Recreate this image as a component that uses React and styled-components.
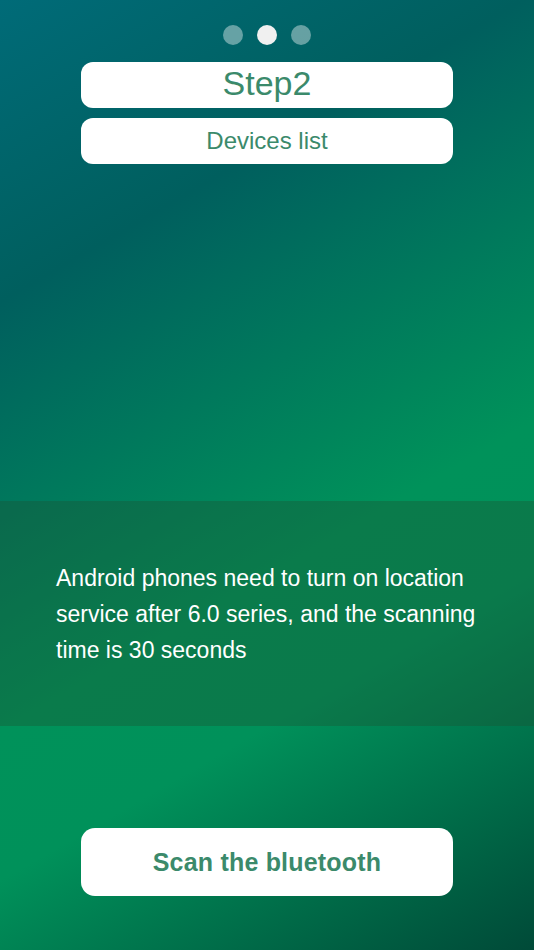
import React from 'react';
import styled, { createGlobalStyle } from 'styled-components';

const GlobalStyle = createGlobalStyle`
  * {
    box-sizing: border-box;
  }

  body {
    margin: 0;
    font-family: 'Liberation Sans', Arial, sans-serif;
  }
`;

const Page = styled.div`
  width: 100%;
  min-height: 950px;
  display: flex;
  flex-direction: column;
  background: linear-gradient(
    150deg,
    #006b78 0%,
    #005f5e 24%,
    #00925a 58%,
    #00915a 70%,
    #004a38 100%
  );
`;

const Header = styled.div`
  height: 501px;
  display: flex;
  flex-direction: column;
  align-items: center;
  padding: 25px 81px 0;
`;

const Dots = styled.div`
  display: flex;
  gap: 14px;
  margin-bottom: 17px;
`;

const Dot = styled.span`
  width: 20px;
  height: 20px;
  border-radius: 50%;
  background-color: ${({ active }) => (active ? '#f0f0f0' : 'rgba(255, 255, 255, 0.4)')};
`;

const Label = styled.div`
  width: 100%;
  height: 46px;
  border-radius: 12px;
  background-color: #fff;
  color: #3b8a6b;
  display: flex;
  align-items: center;
  justify-content: center;
  font-size: ${({ big }) => (big ? '34px' : '24px')};
  padding-bottom: ${({ big }) => (big ? '4px' : '1px')};
  margin-bottom: 10px;
`;

const Notice = styled.div`
  height: 225px;
  padding: 59px 40px 0 56px;
  background-color: rgba(30, 80, 50, 0.35);
`;

const NoticeText = styled.p`
  margin: 0;
  color: #fff;
  font-size: 23px;
  line-height: 36px;
`;

const Footer = styled.div`
  flex: 1;
  display: flex;
  justify-content: center;
  padding: 102px 81px 0;
`;

const ScanButton = styled.button`
  width: 100%;
  height: 68px;
  border: none;
  border-radius: 14px;
  background-color: #fff;
  color: #3b8a6b;
  font-family: 'Liberation Sans', Arial, sans-serif;
  font-size: 25px;
  font-weight: bold;
  letter-spacing: 0.2px;
  cursor: pointer;
`;

const App = () => {
  const steps = [1, 2, 3];
  const current = 2;

  return (
    <>
      <GlobalStyle />
      <Page>
        <Header>
          <Dots>
            {steps.map(step => (
              <Dot key={step} active={step === current} />
            ))}
          </Dots>
          <Label big>Step2</Label>
          <Label>Devices list</Label>
        </Header>
        <Notice>
          <NoticeText>
            Android phones need to turn on location service after 6.0 series, and the scanning time is 30 seconds
          </NoticeText>
        </Notice>
        <Footer>
          <ScanButton>Scan the bluetooth</ScanButton>
        </Footer>
      </Page>
    </>
  );
};

export default App;
